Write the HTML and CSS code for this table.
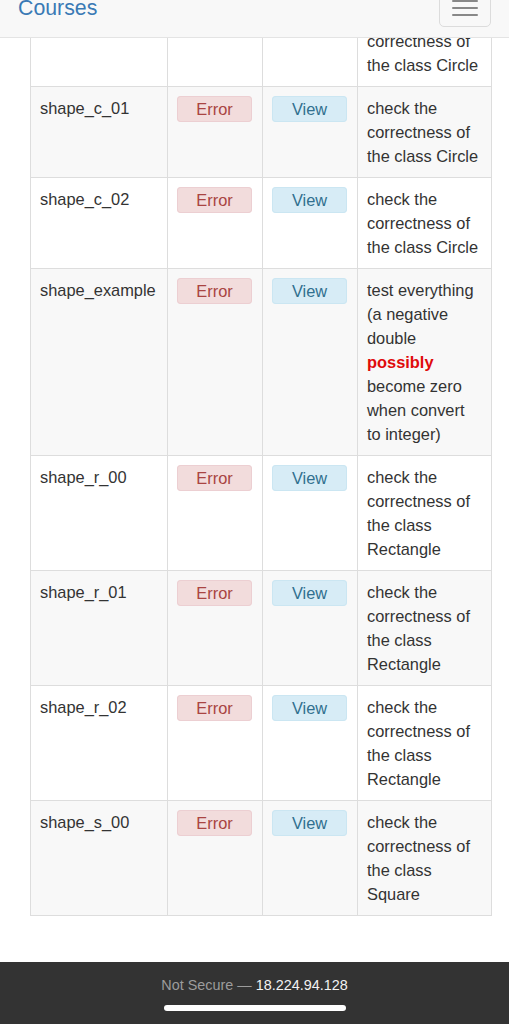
FILE: index.html
```html
<!DOCTYPE html>
<html lang="en">
<head>
<meta charset="utf-8">
<title>Courses</title>
<link rel="stylesheet" href="styles.css">
</head>
<body>
<header class="navbar">
  <a class="brand" href="#">Courses</a>
  <button class="toggle" type="button" aria-label="Toggle navigation">
    <span class="bar"></span><span class="bar"></span><span class="bar"></span>
  </button>
</header>

<main class="content">
  <div class="table-viewport">
  <table class="results">
    <colgroup>
      <col class="c-name"><col class="c-status"><col class="c-view"><col class="c-desc">
    </colgroup>
    <tbody>
      <tr class="scrolled">
        <td></td>
        <td></td>
        <td></td>
        <td class="desc">correctness of<br>the class Circle</td>
      </tr>
      <tr>
        <td>shape_c_01</td>
        <td><span class="label label-error">Error</span></td>
        <td><span class="label label-view">View</span></td>
        <td class="desc">check the<br>correctness of<br>the class Circle</td>
      </tr>
      <tr>
        <td>shape_c_02</td>
        <td><span class="label label-error">Error</span></td>
        <td><span class="label label-view">View</span></td>
        <td class="desc">check the<br>correctness of<br>the class Circle</td>
      </tr>
      <tr>
        <td>shape_example</td>
        <td><span class="label label-error">Error</span></td>
        <td><span class="label label-view">View</span></td>
        <td class="desc">test everything<br>(a negative<br>double<br><strong class="warn">possibly</strong><br>become zero<br>when convert<br>to integer)</td>
      </tr>
      <tr>
        <td>shape_r_00</td>
        <td><span class="label label-error">Error</span></td>
        <td><span class="label label-view">View</span></td>
        <td class="desc">check the<br>correctness of<br>the class<br>Rectangle</td>
      </tr>
      <tr>
        <td>shape_r_01</td>
        <td><span class="label label-error">Error</span></td>
        <td><span class="label label-view">View</span></td>
        <td class="desc">check the<br>correctness of<br>the class<br>Rectangle</td>
      </tr>
      <tr>
        <td>shape_r_02</td>
        <td><span class="label label-error">Error</span></td>
        <td><span class="label label-view">View</span></td>
        <td class="desc">check the<br>correctness of<br>the class<br>Rectangle</td>
      </tr>
      <tr>
        <td>shape_s_00</td>
        <td><span class="label label-error">Error</span></td>
        <td><span class="label label-view">View</span></td>
        <td class="desc">check the<br>correctness of<br>the class<br>Square</td>
      </tr>
    </tbody>
  </table>
  </div>
</main>

<footer class="browserbar">
  <div class="address"><span class="insecure">Not Secure —</span> <span class="host">18.224.94.128</span></div>
  <div class="home-indicator"></div>
</footer>
</body>
</html>
```

FILE: styles.css
```css
* { box-sizing: border-box; }

html, body {
  margin: 0;
  padding: 0;
  background: #fff;
}

body {
  font-family: "Liberation Sans", Arial, sans-serif;
  font-size: 16.4px;
  line-height: 24px;
  color: #333;
}

.navbar {
  position: relative;
  height: 38px;
  background: #f8f8f8;
  border-bottom: 1px solid #e4e4e4;
  z-index: 10;
}

.brand {
  position: absolute;
  left: 18px;
  top: -4px;
  font-size: 21.3px;
  line-height: 24px;
  color: #3a7ab5;
  text-decoration: none;
}

.toggle {
  position: absolute;
  right: 18px;
  top: -14px;
  width: 52px;
  height: 41px;
  padding: 0 0 10px 12px;
  background: transparent;
  border: 1px solid #dcdcdc;
  border-radius: 5px;
  display: flex;
  flex-direction: column;
  justify-content: flex-end;
  gap: 4.5px;
}

.toggle .bar {
  display: block;
  width: 26px;
  height: 2.4px;
  background: #888;
  border-radius: 1px;
}

.content {
  padding: 0 16px 0 30px;
}

.table-viewport {
  overflow: hidden;
}

.results {
  margin-top: -43px;
  border-collapse: collapse;
  table-layout: fixed;
  width: 461px;
}

.c-name { width: 137px; }
.c-status { width: 95px; }
.c-view { width: 95px; }
.c-desc { width: 134px; }

.results td {
  border: 1px solid #ddd;
  padding: 9px;
  vertical-align: top;
  text-align: left;
}

.results tr.scrolled td {
  padding-top: 33px;
}

.results tbody tr:nth-child(even) td {
  background: #f8f8f8;
}

.desc {
  white-space: nowrap;
}

.warn {
  color: #e00b0b;
  font-weight: bold;
}

.label {
  display: block;
  width: 75px;
  height: 26px;
  padding: 1px 0;
  text-align: center;
  line-height: 24px;
  border-radius: 4px;
}

.label-error {
  background: #f2dcdc;
  color: #a94442;
  box-shadow: inset 0 0 0 1px #eccfd2;
}

.label-view {
  background: #d7ecf6;
  color: #31708f;
  box-shadow: inset 0 0 0 1px #cbe6f2;
}

.browserbar {
  position: fixed;
  left: 0;
  right: 0;
  bottom: 0;
  height: 62px;
  background: #333;
  display: flex;
  flex-direction: column;
  align-items: center;
  padding-top: 14px;
}

.address {
  font-size: 14.4px;
  line-height: 18px;
}

.insecure { color: #9c9c9c; }
.host { color: #f2f2f2; }

.home-indicator {
  margin-top: 11px;
  width: 182px;
  height: 6px;
  border-radius: 3px;
  background: #fff;
}
```
